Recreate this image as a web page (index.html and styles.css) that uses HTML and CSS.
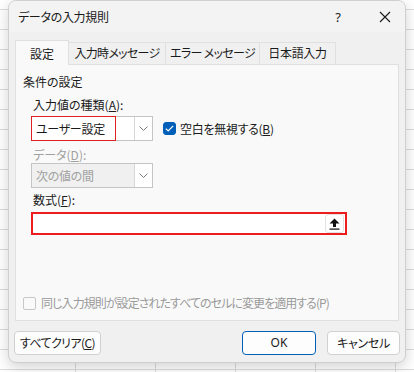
FILE: index.html
```html
<!DOCTYPE html>
<html lang="ja">
<head>
<meta charset="utf-8">
<title>データの入力規則</title>
<link rel="stylesheet" href="styles.css">
</head>
<body>
<div class="dialog">
  <div class="titlebar">
    <span class="title">データの入力規則</span>
    <span class="help">?</span>
    <span class="close">
      <svg width="12" height="12" viewBox="0 0 12 12"><path d="M1 1 L11 11 M11 1 L1 11" stroke="#1a1a1a" stroke-width="1.1" fill="none"/></svg>
    </span>
  </div>
  <div class="body">
    <div class="tabs">
      <div class="tab active">設定</div>
      <div class="tab">入力時メッセージ</div>
      <div class="tab">エラー メッセージ</div>
      <div class="tab">日本語入力</div>
    </div>
    <div class="panel">
      <div class="group-title">条件の設定</div>
      <div class="field-label">入力値の種類(<u>A</u>):</div>
      <div class="row">
        <div class="combo">
          <span class="combo-text marked">ユーザー設定</span>
          <span class="combo-btn"><svg width="9" height="5" viewBox="0 0 9 5"><path d="M0.5 0.5 L4.5 4.5 L8.5 0.5" stroke="#7a7a7a" fill="none"/></svg></span>
        </div>
        <div class="check">
          <span class="box checked"><svg width="9" height="7" viewBox="0 0 9 7"><path d="M0.8 3.6 L3.2 6 L8.2 0.8" stroke="#fff" stroke-width="1.2" fill="none"/></svg></span>
          <span>空白を無視する(<u>B</u>)</span>
        </div>
      </div>
      <div class="field-label disabled">データ(<u>D</u>):</div>
      <div class="combo off">
        <span class="combo-text">次の値の間</span>
        <span class="combo-btn"><svg width="9" height="5" viewBox="0 0 9 5"><path d="M0.5 0.5 L4.5 4.5 L8.5 0.5" stroke="#7a7a7a" fill="none"/></svg></span>
      </div>
      <div class="field-label formula-label">数式(<u>F</u>):</div>
      <div class="formula">
        <span class="formula-input"></span>
        <span class="ref-btn"><svg width="11" height="12" viewBox="0 0 11 12"><path d="M5.5 0.5 L10.5 5.5 L7 5.5 L7 9 L4 9 L4 5.5 L0.5 5.5 Z" fill="#111"/><rect x="0.5" y="10.5" width="10" height="1.2" fill="#111"/></svg></span>
      </div>
      <div class="check disabled apply">
        <span class="box"></span>
        <span class="apply-text">同じ入力規則が設定されたすべてのセルに変更を適用する(P)</span>
      </div>
    </div>
    <div class="buttons">
      <button class="btn clear">すべてクリア(<u>C</u>)</button>
      <span class="grow"></span>
      <button class="btn ok">OK</button>
      <button class="btn cancel">キャンセル</button>
    </div>
  </div>
</div>
</body>
</html>
```

FILE: styles.css
```css
html, body {
  margin: 0;
  padding: 0;
}
body {
  width: 414px;
  height: 372px;
  overflow: hidden;
  background-color: #ffffff;
  background-image:
    repeating-linear-gradient(to bottom, transparent 0, transparent 9px, #dcdcdc 9px, #dcdcdc 10px, transparent 10px, transparent 20px),
    repeating-linear-gradient(to right, transparent 0, transparent 75px, #dcdcdc 75px, #dcdcdc 76px, transparent 76px, transparent 80px);
  font-family: "Noto Sans CJK JP", "Noto Sans", sans-serif;
  font-feature-settings: "palt";
  font-size: 12px;
  color: #1a1a1a;
}
.dialog {
  box-sizing: border-box;
  margin-left: 8px;
  width: 398px;
  height: 363px;
  border: 1px solid #cfcfcf;
  border-radius: 8px;
  background: #f0f0f0;
  box-shadow: 0 4px 14px rgba(0, 0, 0, 0.18);
  display: flex;
  flex-direction: column;
  overflow: hidden;
}
.titlebar {
  height: 31px;
  flex: none;
  display: flex;
  align-items: center;
  background: #f3f3f3;
  padding-left: 9px;
  line-height: 16px;
}
.title {
  flex: 1;
  letter-spacing: -0.3px;
}
.help {
  width: 12px;
  text-align: center;
  font-family: "Noto Sans", sans-serif;
  font-size: 13px;
  margin-right: 35px;
}
.close {
  display: flex;
  width: 12px;
  margin-right: 14px;
}
.body {
  flex: 1;
  display: flex;
  flex-direction: column;
  padding: 8px 6px 0 6px;
}
.tabs {
  display: flex;
  align-items: flex-end;
  height: 24px;
  position: relative;
  z-index: 1;
}
.tab {
  box-sizing: border-box;
  height: 22px;
  line-height: 20px;
  padding: 0;
  border: 1px solid #e0e0e0;
  border-bottom: none;
  border-left: none;
  background: #f0f0f0;
  text-align: center;
  white-space: nowrap;
  letter-spacing: -0.7px;
}
.tab.active {
  height: 25px;
  width: 54px;
  border-left: 1px solid #e0e0e0;
  background: #f9f9f9;
  line-height: 25px;
  margin-bottom: -1px;
  letter-spacing: 0;
}
.tab:nth-child(2) { width: 97px; }
.tab:nth-child(3) { width: 94px; }
.tab:nth-child(4) { width: 76px; letter-spacing: -0.3px; }
.panel {
  box-sizing: border-box;
  height: 257px;
  border: 1px solid #e0e0e0;
  background: #f9f9f9;
  padding: 9px 0 9px 7px;
  display: flex;
  flex-direction: column;
  line-height: 16px;
}
.field-label {
  margin-left: 10px;
  margin-top: 7px;
}
.field-label.disabled {
  color: #a0a0a0;
  margin-top: 6px;
}
.field-label.formula-label {
  margin-top: 4px;
}
.row {
  display: flex;
  align-items: center;
  margin-top: 3px;
}
.combo {
  box-sizing: border-box;
  width: 122px;
  height: 25px;
  margin-left: 8px;
  border: 1px solid #c4c4c4;
  background: #ffffff;
  display: flex;
  align-items: stretch;
  position: relative;
}
.combo-text {
  flex: 1;
  padding-left: 4px;
  line-height: 23px;
  letter-spacing: -0.3px;
}
.combo-text.marked::after {
  content: "";
  position: absolute;
  left: -1px;
  top: -1px;
  width: 85px;
  height: 25px;
  border: 1px solid #e02020;
  box-sizing: border-box;
}
.combo-btn {
  width: 17px;
  border-left: 1px solid #d6d6d6;
  display: flex;
  align-items: center;
  justify-content: center;
}
.combo.off {
  background: #f0f0f0;
  color: #a0a0a0;
}
.combo.off .combo-btn {
  background: #ffffff;
}
.check {
  display: flex;
  align-items: center;
  gap: 4px;
  margin-left: 10px;
  letter-spacing: -0.3px;
}
.box {
  box-sizing: border-box;
  width: 13px;
  height: 13px;
  border: 1px solid #b8b8b8;
  border-radius: 3px;
  background: #f9f9f9;
  display: flex;
  align-items: center;
  justify-content: center;
}
.box.checked {
  background: #005fb8;
  border-color: #005fb8;
}
.check.disabled {
  color: #9a9a9a;
}
.check.apply {
  margin-top: auto;
  margin-left: 0;
  gap: 5px;
}
.apply-text {
  letter-spacing: -0.95px;
}
.check.apply .box {
  border-color: #c8c8c8;
  border-radius: 2px;
}
.formula {
  box-sizing: border-box;
  width: 316px;
  height: 23px;
  margin-left: 8px;
  margin-top: 4px;
  border: 2px solid #ee1c1c;
  background: #ffffff;
  display: flex;
  align-items: stretch;
  padding: 0 1px 0 0;
}
.formula-input {
  flex: 1;
}
.ref-btn {
  box-sizing: border-box;
  width: 19px;
  border: 1px solid #e2e2e2;
  border-radius: 3px;
  background: #ffffff;
  display: flex;
  align-items: center;
  justify-content: center;
}
.buttons {
  display: flex;
  align-items: center;
  margin-top: 10px;
  margin-left: -1px;
  margin-right: -1px;
  gap: 11px;
}
.grow {
  flex: 1;
}
.btn {
  box-sizing: border-box;
  height: 24px;
  border: 1px solid #d0d0d0;
  border-radius: 4px;
  background: #fdfdfd;
  font-family: "Noto Sans CJK JP", "Noto Sans", sans-serif;
  font-feature-settings: "palt";
  font-size: 12px;
  color: #1a1a1a;
  padding: 0;
  line-height: 22px;
}
.btn.clear {
  width: 87px;
  letter-spacing: -0.6px;
}
.btn.ok {
  width: 74px;
  border-color: #005fb8;
  font-family: "Noto Sans", sans-serif;
}
.btn.cancel {
  width: 73px;
  letter-spacing: -0.3px;
}
```
